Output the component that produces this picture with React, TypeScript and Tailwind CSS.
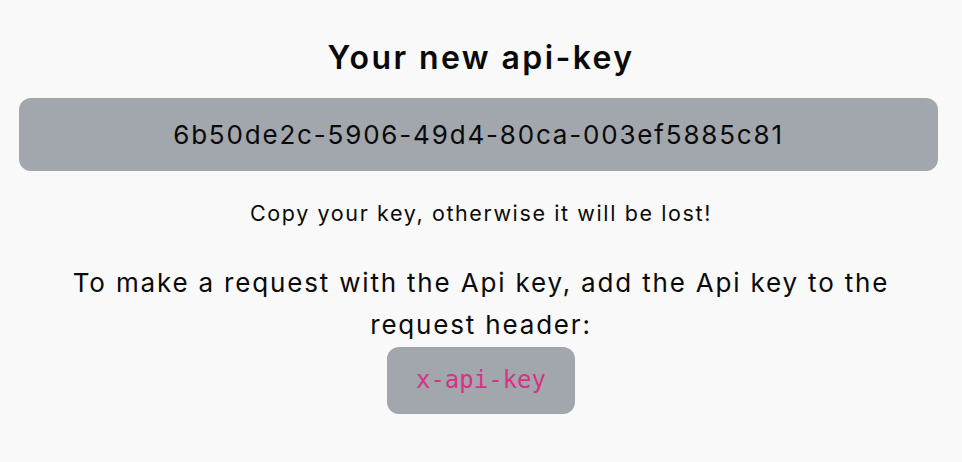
import React from "react";

const ApiKeyPage = () => {
  const apiKey = "6b50de2c-5906-49d4-80ca-003ef5885c81";

  return (
    <div className="min-h-screen bg-[#f9f9f9] text-[#0a0a0a] font-['Inter','Liberation_Sans',sans-serif]">
      <div className="flex flex-col items-center px-[19px] pt-[38px] text-center">
        <h1 className="text-[32px] leading-10 font-semibold tracking-[0.075em]">Your new api-key</h1>

        {/* Key box */}
        <div className="mt-[20px] w-[919px] self-start rounded-xl bg-[#a2a6ad] py-[21px] text-[26px] leading-[31px] tracking-[0.07em]">
          {apiKey}
        </div>

        <p className="mt-[28px] text-[21.5px] leading-7 tracking-[0.075em]">
          Copy your key, otherwise it will be lost!
        </p>

        <p className="mt-[35px] max-w-[880px] text-[26px] leading-[42px] tracking-[0.07em]">
          To make a request with the Api key, add the Api key to the request header:
        </p>

        <code className="mt-[1px] rounded-xl bg-[#a2a6ad] px-[29px] py-[20px] font-['DejaVu_Sans_Mono',monospace] text-[24px] leading-[27px] text-[#d63384]">
          x-api-key
        </code>
      </div>
    </div>
  );
};

export default function App() {
  return <ApiKeyPage />;
}
